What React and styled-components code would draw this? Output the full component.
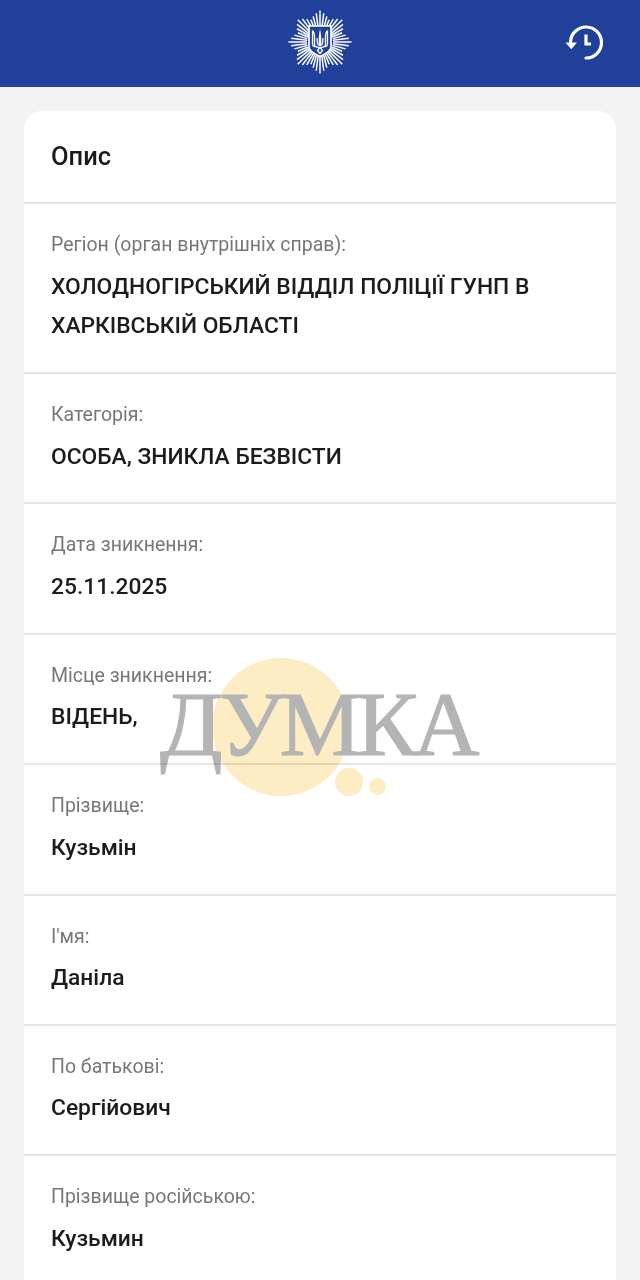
import React from 'react';
import styled, { createGlobalStyle } from 'styled-components';

const GlobalStyle = createGlobalStyle`
	html, body {
		margin: 0;
		padding: 0;
		background: #f3f3f3;
	}
	body {
		font-family: Roboto, "Noto Sans", sans-serif;
	}
`;

const Page = styled.div`
	position: relative;
	width: 640px;
	height: 1280px;
	overflow: hidden;
	background: #f3f3f3;
`;

const Header = styled.header`
	display: flex;
	align-items: center;
	justify-content: space-between;
	box-sizing: border-box;
	height: 87px;
	padding: 0 36px 4px 288px;
	background: #21409a;
`;

const HistoryButton = styled.div`
	width: 40px;
	height: 40px;
`;

const Card = styled.main`
	margin: 24px 24px 0;
	background: #fff;
	border-radius: 18px 18px 0 0;
`;

const CardTitle = styled.h2`
	margin: 0;
	height: 91px;
	padding-left: 27px;
	line-height: 91px;
	font-size: 25.5px;
	font-weight: 500;
	color: #1a1a1a;
	border-bottom: 2px solid #e6e6e6;
`;

const Row = styled.section`
	box-sizing: content-box;
	height: ${props => (props.$tall ? 141 : 101.4)}px;
	padding: 27px 27px 0;
	border-bottom: 2px solid #e6e6e6;
`;

const Label = styled.div`
	height: 27px;
	line-height: 27px;
	font-size: 19.5px;
	color: #777;
`;

const Value = styled.div`
	margin-top: 8.5px;
	line-height: 39px;
	font-size: 22.8px;
	font-weight: 500;
	color: #1c1c1c;
`;

const Watermark = styled.div`
	position: absolute;
	left: 140px;
	top: 650px;
	width: 360px;
	height: 160px;
	mix-blend-mode: multiply;
	pointer-events: none;
`;

const Dot = styled.div`
	position: absolute;
	left: ${props => props.$x}px;
	top: ${props => props.$y}px;
	width: ${props => props.$size}px;
	height: ${props => props.$size}px;
	border-radius: 50%;
	background: #fcedc4;
`;

const WatermarkText = styled.div`
	position: absolute;
	left: 20px;
	top: 24px;
	font-family: "Liberation Serif", serif;
	font-size: 92px;
	line-height: 100px;
	letter-spacing: -4.8px;
	color: #b4b4b4;
	-webkit-text-stroke: 1.2px #b4b4b4;
	white-space: nowrap;
`;

const rays = Array.from({ length: 48 }, (_, i) => (i * 360) / 48);

const Emblem = () => (
	<svg width="64" height="64" viewBox="0 0 64 64">
		{rays.map((angle, i) => {
			const peak = Math.abs((i % 6) - 3) / 3;
			return (
				<line
					key={angle}
					x1="32"
					y1={32 - 13}
					x2="32"
					y2={32 - (24 + peak * 7.5)}
					stroke="#fff"
					strokeWidth="1.5"
					transform={`rotate(${angle} 32 32)`}
				/>
			);
		})}
		<path d="M21 16h22v21c0 4-5 6.500-11 9.500c-6-3-11-5.500-11-9.500z" fill="#21409a" stroke="#fff" strokeWidth="1.7" />
		<path
			d="M32 19c-1.300 5-1.500 11-1 17h2c.5-6 .3-12-1-17z"
			fill="#fff"
		/>
		<path
			d="M24.500 20.500c1.800 1.500 2 4 2 7v7c0 1.800 2 2.800 4.500 2.800h2c2.500 0 4.500-1 4.500-2.800v-7c0-3 .2-5.500 2-7M24.500 20.500v13.500c0 1.500.8 2.500 2 3M39.500 20.500v13.500c0 1.500-.8 2.500-2 3M29 28c0 3 .3 5.500 1.500 7.500M35 28c0 3-.3 5.500-1.500 7.500M29.500 40.500l2.500-3l2.500 3l-2.500 3z"
			fill="none"
			stroke="#fff"
			strokeWidth="1.3"
		/>
	</svg>
);

const HistoryIcon = () => (
	<svg width="40" height="40" viewBox="0 0 40 40" fill="none" stroke="#fff" strokeWidth="3.2">
		<path d="M6.500 20a15.500 15.500 0 1 1 15.500 16" strokeLinecap="round" />
		<path d="M1.500 20.500h11.500l-5.700 6.800z" fill="#fff" stroke="none" />
		<path d="M22 12.500v9.500h5" />
	</svg>
);

const fields = [
	{ label: 'Регіон (орган внутрішніх справ):', value: 'ХОЛОДНОГІРСЬКИЙ ВІДДІЛ ПОЛІЦІЇ ГУНП В ХАРКІВСЬКІЙ ОБЛАСТІ', tall: true },
	{ label: 'Категорія:', value: 'ОСОБА, ЗНИКЛА БЕЗВІСТИ' },
	{ label: 'Дата зникнення:', value: '25.11.2025' },
	{ label: 'Місце зникнення:', value: 'ВІДЕНЬ,' },
	{ label: 'Прізвище:', value: 'Кузьмін' },
	{ label: "І'мя:", value: 'Даніла' },
	{ label: 'По батькові:', value: 'Сергійович' },
	{ label: 'Прізвище російською:', value: 'Кузьмин' },
];

const App = () => {
	return (
		<Page>
			<GlobalStyle />
			<Header>
				<Emblem />
				<HistoryButton>
					<HistoryIcon />
				</HistoryButton>
			</Header>
			<Card>
				<CardTitle>Опис</CardTitle>
				{fields.map(field => (
					<Row key={field.label} $tall={field.tall}>
						<Label>{field.label}</Label>
						<Value>{field.value}</Value>
					</Row>
				))}
			</Card>
			<Watermark>
				<Dot $x={72} $y={8} $size={138} />
				<Dot $x={195} $y={118} $size={28} />
				<Dot $x={229} $y={128} $size={17} />
				<WatermarkText>ДУМКА</WatermarkText>
			</Watermark>
		</Page>
	);
};

export default App;
